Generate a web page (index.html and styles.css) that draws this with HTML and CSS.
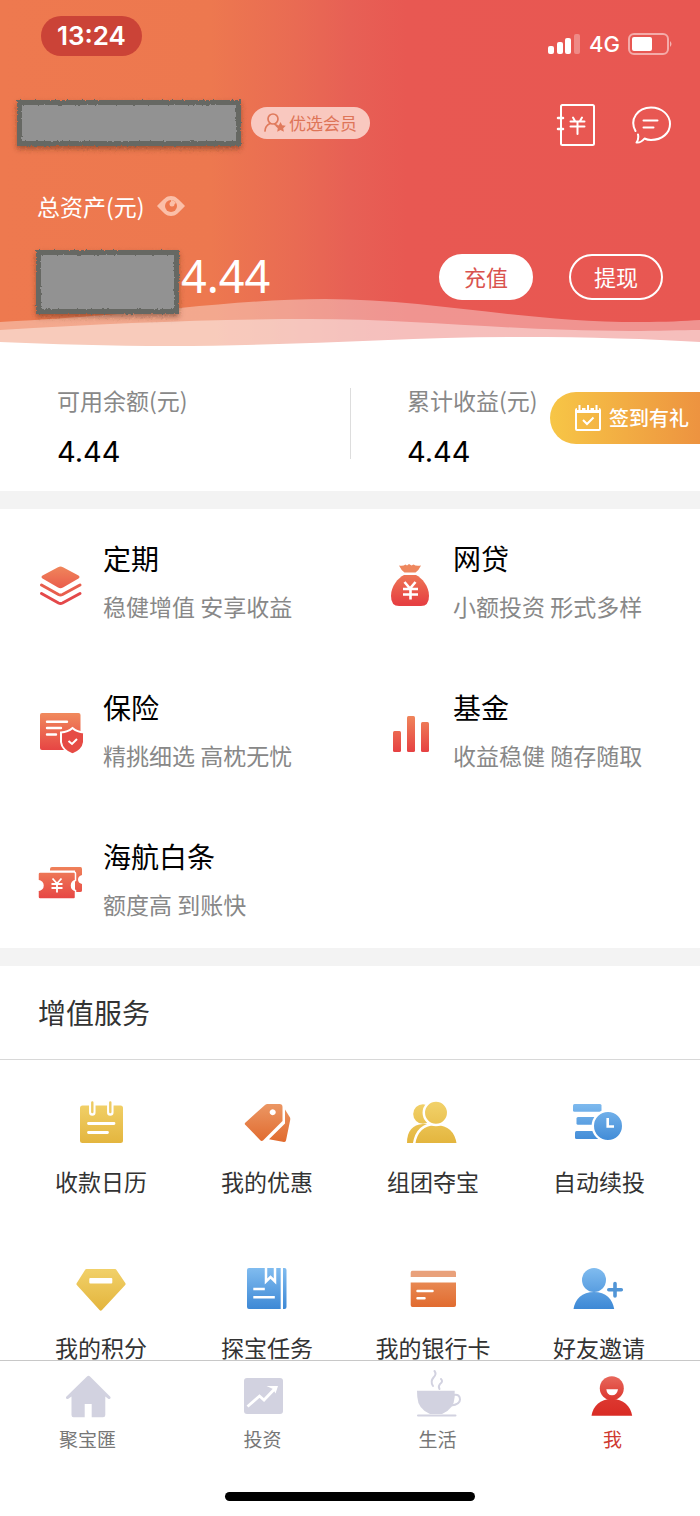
FILE: index.html
```html
<!DOCTYPE html>
<html lang="zh-CN">
<head>
<meta charset="utf-8">
<meta name="viewport" content="width=device-width, initial-scale=1">
<title>我</title>
<link rel="stylesheet" href="styles.css">
</head>
<body>
<svg class="defs" width="0" height="0" aria-hidden="true">
  <defs>
    <linearGradient id="red" x1="0" y1="0" x2="0" y2="48" gradientUnits="userSpaceOnUse"><stop offset=".15" stop-color="#f0885c"/><stop offset=".95" stop-color="#e64042"/></linearGradient>
    <linearGradient id="gold" x1="0" y1="4" x2="0" y2="48" gradientUnits="userSpaceOnUse"><stop offset="0" stop-color="#f2d26b"/><stop offset="1" stop-color="#e3b43c"/></linearGradient>
    <linearGradient id="orange" x1="0" y1="4" x2="0" y2="48" gradientUnits="userSpaceOnUse"><stop offset="0" stop-color="#ec9a68"/><stop offset="1" stop-color="#e0672a"/></linearGradient>
    <linearGradient id="blue" x1="0" y1="4" x2="0" y2="48" gradientUnits="userSpaceOnUse"><stop offset="0" stop-color="#82bdf0"/><stop offset="1" stop-color="#3a86d4"/></linearGradient>
    <linearGradient id="me" x1="0" y1="8" x2="0" y2="48" gradientUnits="userSpaceOnUse"><stop offset="0" stop-color="#e8685c"/><stop offset=".6" stop-color="#dc372f"/><stop offset="1" stop-color="#d92b24"/></linearGradient>
    <filter id="rough" x="-5%" y="-10%" width="110%" height="120%"><feTurbulence type="fractalNoise" baseFrequency=".4" numOctaves="2" seed="4"/><feDisplacementMap in="SourceGraphic" scale="3" xChannelSelector="R" yChannelSelector="G"/></filter>
  </defs>
</svg>
<div class="app">
  <main class="content">
    <header class="hero">
      <svg class="wave" viewBox="0 0 700 52" preserveAspectRatio="none" aria-hidden="true">
        <path fill="#fff" fill-opacity=".36" d="M0 26C90 21 130 17 180 12C230 7 280 3 325 3C430 3 520 26 640 26C665 26 685 25 700 24V52H0Z"/>
        <path fill="#fff" fill-opacity=".4" d="M0 34C110 27 220 23 310 23C420 23 510 35 630 35C660 35 680 34 700 34V52H0Z"/>
        <path fill="#fff" d="M0 46C50 48 110 50 170 50C300 50 400 41 520 41C590 41 650 43 700 46V52H0Z"/>
      </svg>
      <div class="status">
        <time class="clock">13:24</time>
        <div class="signals">
          <svg width="34" height="24" viewBox="0 0 34 24" aria-hidden="true"><g fill="#fff"><rect x="1" y="14" width="6" height="8" rx="2"/><rect x="10" y="10" width="6" height="12" rx="2"/><rect x="18" y="6" width="6" height="16" rx="2"/><rect x="27" y="2" width="6" height="20" rx="2" opacity=".3"/></g></svg>
          <span>4G</span>
          <svg width="46" height="24" viewBox="0 0 46 24" aria-hidden="true"><rect x="1" y="2" width="39" height="20" rx="5" fill="none" stroke="#fff" stroke-opacity=".5" stroke-width="2"/><rect x="4" y="5" width="20" height="14" rx="2" fill="#fff"/><path d="M42 9q3 3 0 6z" fill="#fff" opacity=".55"/></svg>
        </div>
      </div>
      <div class="profile">
        <div class="mask mask-name"></div>
        <a class="member" href="#member">
          <svg width="22" height="22" viewBox="0 0 22 22" aria-hidden="true"><g fill="none" stroke="#e07a5c" stroke-width="1.7" stroke-linecap="round"><circle cx="9" cy="7" r="5"/><path d="M1 19c0-4 2-6 5-7.500M11 12.500l2 1"/></g><path fill="#e07a5c" d="M16.500 10l1.700 3.200 3.600.5-2.600 2.500.7 3.600-3.400-1.700-3.300 1.700.6-3.600-2.600-2.500 3.700-.5z"/></svg>
          <span>优选会员</span>
        </a>
        <nav class="tools">
          <a href="#bill" aria-label="账单"><svg width="40" height="44" viewBox="0 0 40 44" fill="none" stroke="#fff" stroke-width="2" stroke-linecap="round"><rect x="5" y="2" width="33" height="40" rx="1.500"/><path d="M2 15h5M2 26h5" stroke-width="2.500"/><path d="M17 14.500l2 3.500M26 14.500l-2 3.500M14.500 18.500h14M14.500 23.500h14M21.500 18.500v12.500" stroke-width="2"/></svg></a>
          <a href="#message" aria-label="消息"><svg width="42" height="44" viewBox="0 0 42 44" fill="none" stroke="#fff" stroke-width="2" stroke-linecap="round" stroke-linejoin="round"><path d="M5.500 28C-1 16 8 4.500 21 4.500C32 4.500 40 12 40 21C40 30 32 37 21 37Q17.500 37 14.500 35.500Q11 40 6.500 39.500Q9 36 8 31.500"/><path d="M13.500 17.500h14M13.500 24.500h10"/></svg></a>
        </nav>
      </div>
      <div class="total">
        <span>总资产(元)</span>
        <button class="eye" type="button" aria-label="显示或隐藏金额"><svg width="28" height="22" viewBox="0 0 28 22"><path fill="#fbbfa8" d="M0 11C7 4 9 1 14 1s7 3 14 10C21 18 19 21 14 21S7 18 0 11z"/><circle cx="14" cy="11" r="6" fill="#ee784e"/><path d="M14 11V5a6 6 0 0 1 5 3z" fill="#fbbfa8"/><circle cx="15" cy="9" r="2.500" fill="#fbbfa8"/></svg></button>
      </div>
      <div class="amount">
        <div class="mask mask-amount"></div>
        <strong class="sum">4.44</strong>
        <div class="actions">
          <button class="pill pill-solid" type="button">充值</button>
          <button class="pill" type="button">提现</button>
        </div>
      </div>
    </header>

    <section class="balance">
      <div class="figure"><span class="caption">可用余额(元)</span><span class="value">4.44</span></div>
      <div class="figure"><span class="caption">累计收益(元)</span><span class="value">4.44</span></div>
      <button class="checkin" type="button">
        <svg width="28" height="28" viewBox="0 0 28 28" fill="none" stroke="#fff" aria-hidden="true"><rect x="2" y="5" width="24" height="21" rx="1" stroke-width="2"/><path d="M2 7h24" stroke-width="4"/><path d="M5.500 1v5M14 1v5M22.500 1v5" stroke-width="5" stroke="#f3b746"/><path d="M5.500 1v6M14 1v6M22.500 1v6" stroke-width="2"/><path d="M9 16l4 4 6.500-6.500" stroke-width="2"/></svg>
        <span>签到有礼</span>
      </button>
    </section>

    <section class="products">
      <a class="product" href="#fixed">
        <svg class="product-icon" viewBox="0 0 48 48" aria-hidden="true"><path fill="url(#red)" d="M21 9.200Q23.500 7.800 26 9.200L41.500 17.500Q43.500 19 41.500 20.500L26 29.500Q23.500 31 21 29.500L5.500 20.500Q3.500 19 5.500 17.500Z"/><path fill="none" stroke="#e85e4d" stroke-width="3" stroke-linecap="round" stroke-linejoin="round" d="M4.500 27L21.500 36.500Q23.500 37.500 25.500 36.500L43 27"/><path fill="none" stroke="#e4484a" stroke-width="3" stroke-linecap="round" stroke-linejoin="round" d="M4.500 35.500L21.500 45Q23.500 46 25.500 45L43 35.500"/></svg>
        <span class="product-text"><span class="name">定期</span><span class="desc">稳健增值 安享收益</span></span>
      </a>
      <a class="product" href="#loan">
        <svg class="product-icon" viewBox="0 0 48 48" aria-hidden="true"><path fill="#ee875e" d="M12 7.500Q16 8.500 18.500 6.500L20 7.500L22 6L24.500 7.500L26.500 6.500Q29 8.500 34 7.500Q32 12 28.500 14.500H17.500Q14 12 12 7.500Z"/><path fill="url(#red)" d="M17 17h12C35 20 42 28 42 38Q42 48 34 48H12Q4 48 4 38C4 28 11 20 17 17Z"/><g fill="none" stroke="#fff" stroke-width="2.600"><path d="M17.500 24l5.500 6.500 5.500-6.500M16 31h15M16 36.500h15M23.500 30v11.500"/></g></svg>
        <span class="product-text"><span class="name">网贷</span><span class="desc">小额投资 形式多样</span></span>
      </a>
      <a class="product" href="#insurance">
        <svg class="product-icon" viewBox="0 0 48 48" aria-hidden="true"><rect x="3" y="6" width="40.500" height="37" rx="2" fill="url(#red)"/><path stroke="#fff" stroke-width="2.400" stroke-linecap="round" d="M10 14.700h20M10 21h14M10 27.500h9"/><path fill="#e64b45" stroke="#fff" stroke-width="2" d="M35.500 21Q40 25 47 25.500V35Q46 43 35.500 47.500Q25 43 24 35V25.500Q31 25 35.500 21Z"/><path fill="none" stroke="#fff" stroke-width="2" d="M31.500 34l3.500 3 5-5"/></svg>
        <span class="product-text"><span class="name">保险</span><span class="desc">精挑细选 高枕无忧</span></span>
      </a>
      <a class="product" href="#fund">
        <svg class="product-icon" viewBox="0 0 48 48" aria-hidden="true"><g fill="url(#red)"><rect x="6" y="24" width="8" height="21" rx="1.500"/><rect x="20" y="9" width="8" height="36" rx="1.500"/><rect x="34" y="15" width="8" height="30" rx="1.500"/></g></svg>
        <span class="product-text"><span class="name">基金</span><span class="desc">收益稳健 随存随取</span></span>
      </a>
      <a class="product" href="#credit">
        <svg class="product-icon" viewBox="0 0 48 48" aria-hidden="true"><path fill="url(#red)" d="M15 11H43.500Q45 11 45 13V19Q41 20 41 23.500Q41 27 45 28V34.500Q45 36 43 36H38V14.500H13V13Q13 11 15 11Z"/><path fill="url(#red)" stroke="#fff" stroke-width="1.500" d="M3 16H37Q38.500 16 38.500 18V24.500Q34.500 25.500 34.500 29.500Q34.500 33.500 38.500 34.500V41Q38.500 43 37 43H3Q1 43 1 41V34.500Q6 33.500 6 29.500Q6 25.500 1 24.500V18Q1 16 3 16Z"/><g fill="none" stroke="#fff" stroke-width="1.800"><path d="M15.500 22.500l4.500 5 4.500-5M14.500 28h11M14.500 32h11M20 27v9.500"/></g></svg>
        <span class="product-text"><span class="name">海航白条</span><span class="desc">额度高 到账快</span></span>
      </a>
    </section>

    <section class="services">
      <h2 class="services-title">增值服务</h2>
      <div class="services-grid">
        <a class="service" href="#calendar">
          <svg class="service-icon" viewBox="0 0 52 52" aria-hidden="true"><rect x="5" y="8.500" width="43" height="37.500" rx="2.500" fill="url(#gold)"/><path stroke="#fff" stroke-width="6.500" stroke-linecap="round" d="M17.300 6v9.500M35.300 6v9.500"/><path stroke="#edca62" stroke-width="2.400" stroke-linecap="round" d="M17.300 5.500v9.500M35.300 5.500v9.500"/><path stroke="#fff" stroke-width="2.800" stroke-linecap="round" d="M13.500 26.500h25.500M13.500 35.500h19"/></svg>
          <span>收款日历</span>
        </a>
        <a class="service" href="#coupon">
          <svg class="service-icon" viewBox="0 0 52 52" aria-hidden="true"><path fill="url(#orange)" fill-rule="evenodd" d="M24 8Q25 7 26.500 7H38.500Q41.500 7 41.500 10V24L22 43.500Q20.500 44.500 19 43L4.500 28Q3 26.500 4.500 25.500ZM31.700 12.300a3 3 0 1 0 .01 0Z"/><path fill="url(#orange)" d="M44 12.500L49 20.500Q49.500 21.500 49.200 23L45 43.500Q44.500 45 43 45L28 42.300L44 26.500Z"/></svg>
          <span>我的优惠</span>
        </a>
        <a class="service" href="#group">
          <svg class="service-icon" viewBox="0 0 52 52" aria-hidden="true"><circle cx="16" cy="17" r="9.800" fill="url(#gold)"/><path fill="url(#gold)" d="M0 46Q0 28 16 27H22L16 46Z"/><g fill="url(#gold)" stroke="#fff" stroke-width="2.500"><path d="M7 47.200Q10 27 29 27T51 47.200Z"/><circle cx="29" cy="15.700" r="12.200"/></g></svg>
          <span>组团夺宝</span>
        </a>
        <a class="service" href="#auto">
          <svg class="service-icon" viewBox="0 0 52 52" aria-hidden="true"><g fill="url(#blue)"><rect y="7" width="28.500" height="7.700" rx="1.500"/><rect x="3.500" y="20" width="24" height="7.700" rx="1.500"/><rect x="2" y="34" width="26" height="8" rx="1.500"/></g><circle cx="35" cy="29" r="15.200" fill="url(#blue)" stroke="#fff" stroke-width="2.400"/><path fill="none" stroke="#fff" stroke-width="2.600" d="M34.700 21v8.500H41"/></svg>
          <span>自动续投</span>
        </a>
        <a class="service" href="#points">
          <svg class="service-icon" viewBox="0 0 52 52" aria-hidden="true"><path fill="url(#gold)" d="M11.500 6H40Q41 6 41.500 7L50.300 20Q51 21.300 50 22.300L27 47Q25.700 48.500 24.500 47L2 22.300Q1 21.300 1.800 20L10 7Q10.500 6 11.500 6Z"/><rect x="14.300" y="15" width="23" height="5.500" rx="1" fill="#fff"/></svg>
          <span>我的积分</span>
        </a>
        <a class="service" href="#tasks">
          <svg class="service-icon" viewBox="0 0 52 52" aria-hidden="true"><path fill="url(#blue)" d="M8 5H39.700V46H8Q6 46 6 44V7Q6 5 8 5ZM42 5H43.500Q45.500 5 45.500 7V44Q45.500 46 43.500 46H42Z"/><path fill="none" stroke="#fff" stroke-width="2.500" d="M25 5V18.500L29.500 14L34 18.500V5"/><path stroke="#fff" stroke-width="2.600" d="M12.300 26h11.500M12.300 34.300h21.500"/></svg>
          <span>探宝任务</span>
        </a>
        <a class="service" href="#cards">
          <svg class="service-icon" viewBox="0 0 52 52" aria-hidden="true"><path fill="#e9a17b" d="M5.500 7.700H47Q49 7.700 49 9.700V14H3.700V9.700Q3.700 7.700 5.500 7.700Z"/><path fill="url(#orange)" d="M3.700 19.500H49V42Q49 44 47 44H5.500Q3.700 44 3.700 42Z"/><path stroke="#fff" stroke-width="2.500" stroke-linecap="round" d="M10.500 28h15M10.500 35.300h7"/></svg>
          <span>我的银行卡</span>
        </a>
        <a class="service" href="#invite">
          <svg class="service-icon" viewBox="0 0 52 52" aria-hidden="true"><g fill="url(#blue)"><circle cx="21" cy="17" r="12"/><path d="M.5 46C2 36 9 29 21 29S39.500 36 41.200 46Z"/></g><path stroke="#5195d6" stroke-width="3.600" stroke-linecap="round" d="M42 20.500v12.500M35.800 26.700h12.500"/></svg>
          <span>好友邀请</span>
        </a>
      </div>
    </section>
  </main>

  <footer class="tabbar">
    <nav class="tabs">
      <a class="tab" href="#home"><svg class="tab-icon" viewBox="0 0 48 52" aria-hidden="true"><path fill="#d2d2e0" d="M23 8.500Q24.500 7 26 8.500L46.500 29Q47 31 44.500 31L41.300 28.500V47Q41.300 49.300 39 49.300H27.700V36H20.700V49.300H9.500Q7.500 49.300 7.500 47V28.500L4 31Q1.500 31 2 29Z"/></svg><span>聚宝匯</span></a>
      <a class="tab" href="#invest"><svg class="tab-icon" viewBox="0 0 48 52" aria-hidden="true"><rect x="5" y="10" width="39" height="36" rx="3" fill="#d2d2e0"/><path fill="none" stroke="#fff" stroke-width="2.800" d="M8.500 38.500L20.500 28L25 32L36 20.500"/><path fill="#fff" d="M27.500 18H39L36.500 25.500L34 21Z"/></svg><span>投资</span></a>
      <a class="tab" href="#life"><svg class="tab-icon" viewBox="0 0 48 52" aria-hidden="true"><path fill="#d2d2e0" d="M3 22.700H40.700V29Q40 41 28 46H16Q4 41 3.300 29Z"/><path fill="none" stroke="#d2d2e0" stroke-width="2" stroke-linecap="round" d="M40 27Q46 26 46 31.500Q46 36.500 37 37.500M4 47.500H41.500M20.500 3Q23 6 19.500 9.500Q16 13.500 19 18M27 11Q29.500 13.500 26 16Q24 18.500 25.500 21"/></svg><span>生活</span></a>
      <a class="tab tab-active" href="#me" aria-current="page"><svg class="tab-icon" viewBox="0 0 48 52" aria-hidden="true"><g fill="url(#me)"><circle cx="22.800" cy="20.300" r="12"/><path d="M2.500 47.700C4 38 11 31 22.800 31S41.500 38 43.200 47.700Z"/></g><path fill="#fff" d="M17.300 21.300H29Q28 27.300 23 27.300T17.300 21.300Z"/></svg><span>我</span></a>
    </nav>
    <div class="home-indicator"></div>
  </footer>
</div>
</body>
</html>
```
FILE: styles.css
```css
* {
  box-sizing: border-box;
}

body {
  margin: 0;
  background: #fff;
  color: #333;
  font-family: "Noto Sans CJK SC", sans-serif;
  font-size: 23px;
  line-height: 30px;
}

a {
  color: inherit;
  text-decoration: none;
}

button {
  padding: 0;
  border: 0;
  background: none;
  color: inherit;
  font: inherit;
}

svg {
  display: block;
  flex: none;
}

.defs {
  position: absolute;
}

.app {
  display: flex;
  flex-direction: column;
  height: 100vh;
}

.content {
  flex: 1;
  min-height: 0;
  overflow-y: auto;
  scrollbar-width: none;
}

/* Header */
.hero {
  position: relative;
  padding: 16px 28px 34px 0;
  color: #fff;
  background: linear-gradient(90deg, #ee794f 0, #ed784f 30%, #e96b53 42%, #e76055 50%, #e85852 58%, #e85752 100%);
}

.wave {
  position: absolute;
  left: 0;
  bottom: 0;
  width: 100%;
  height: 52px;
}

.status,
.profile,
.total,
.amount {
  position: relative;
  display: flex;
  align-items: center;
}

.status {
  justify-content: space-between;
  padding-left: 41px;
}

.clock {
  padding: 0 16px;
  border-radius: 20px;
  background: #cb4337;
  font: 600 26px/40px Inter, sans-serif;
}

.signals {
  display: flex;
  align-items: center;
  gap: 8px;
  margin-top: 15px;
  margin-right: -2px;
  font: 500 22px/24px Inter, sans-serif;
}

.profile {
  gap: 10px;
  height: 50px;
  margin-top: 42px;
  padding-left: 17px;
}

.mask {
  border: 5px solid #666763;
  background: #929292;
  box-shadow: 0 3px 5px rgba(90, 50, 30, .5);
  filter: url(#rough);
}

.mask-name {
  width: 224px;
  height: 46px;
}

.member {
  display: flex;
  align-items: center;
  gap: 3px;
  padding: 0 13px;
  border-radius: 16px;
  background: #f9c8bf;
  color: #de7558;
  font-size: 17px;
  line-height: 32px;
}

.tools {
  display: flex;
  gap: 34px;
  margin-left: auto;
  padding-top: 3px;
}

.total {
  gap: 12px;
  height: 30px;
  margin-top: 43px;
  padding-left: 37px;
}

.amount {
  align-items: flex-start;
  margin-top: 29px;
  padding-left: 36px;
  padding-right: 9px;
}

.mask-amount {
  width: 143px;
  height: 64px;
}

.sum {
  margin-left: 2px;
  font: 400 45px/52px "Noto Sans", sans-serif;
}

.actions {
  display: flex;
  gap: 36px;
  margin-left: auto;
  padding-top: 4px;
}

.pill {
  width: 94px;
  height: 46px;
  padding-bottom: 3px;
  border: 2px solid #fff;
  border-radius: 23px;
  font-size: 22px;
}

.pill-solid {
  background: #fff;
  color: #d9534f;
}

/* Balance */
.balance {
  position: relative;
  display: grid;
  grid-template-columns: 1fr 1fr;
  padding: 37px 0 21px;
}

.balance::before {
  content: "";
  position: absolute;
  top: 40px;
  bottom: 32px;
  left: 50%;
  width: 1px;
  background: #ddd;
}

.figure {
  display: flex;
  flex-direction: column;
  gap: 19px;
  padding-left: 57px;
}

.caption {
  color: #888;
}

.value {
  color: #000;
  font: 400 29px/36px Inter, sans-serif;
}

.checkin {
  position: absolute;
  top: 44px;
  right: 0;
  display: flex;
  align-items: center;
  gap: 7px;
  height: 52px;
  padding: 0 11px 0 24px;
  border-radius: 26px 0 0 26px;
  background: linear-gradient(90deg, #f7c646, #ed9340);
  color: #fff;
  font-size: 20px;
  font-weight: 500;
}

/* Products */
.products {
  display: grid;
  grid-template-columns: 1fr 1fr;
  row-gap: 66px;
  padding: 31px 0 27px;
  border-top: 18px solid #f3f3f3;
  border-bottom: 18px solid #f3f3f3;
}

.product {
  display: flex;
  align-items: center;
  gap: 18px;
  padding-left: 37px;
}

.product-icon {
  width: 48px;
  height: 48px;
}

.product-text {
  display: flex;
  flex-direction: column;
  gap: 15px;
  padding-bottom: 2px;
}

.name {
  color: #000;
  font-size: 28px;
  line-height: 36px;
}

.desc {
  color: #888;
}

/* Services */
.services-title {
  margin: 0;
  padding: 28px 38px;
  border-bottom: 1px solid #d8d8d8;
  font-size: 28px;
  font-weight: 400;
  line-height: 37px;
}

.services-grid {
  display: grid;
  grid-template-columns: repeat(4, 1fr);
  row-gap: 67px;
  padding: 37px 18px 40px;
}

.service {
  display: flex;
  flex-direction: column;
  align-items: center;
  gap: 17px;
  white-space: nowrap;
}

.service-icon {
  width: 52px;
  height: 52px;
}

/* Tab bar */
.tabbar {
  padding: 7px 0 15px;
  border-top: 1px solid #c8c8c8;
  background: #fff;
}

.tabs {
  display: grid;
  grid-template-columns: repeat(4, 1fr);
}

.tab {
  display: flex;
  flex-direction: column;
  align-items: center;
  gap: 7px;
  color: #777;
  font-size: 19px;
  line-height: 24px;
}

.tab-icon {
  width: 48px;
  height: 52px;
}

.tab-active {
  color: #cf3a30;
}

.home-indicator {
  width: 250px;
  height: 9px;
  margin: 41px auto 0;
  border-radius: 5px;
  background: #000;
}
```
